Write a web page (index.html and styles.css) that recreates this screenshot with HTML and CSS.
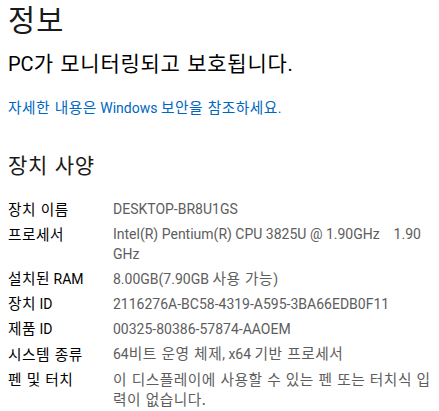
FILE: index.html
```html
<!DOCTYPE html>
<html lang="ko">
<head>
<meta charset="utf-8">
<link rel="stylesheet" href="styles.css">
</head>
<body>
<main class="page">
  <h1 class="title ko">정보</h1>
  <p class="status">PC<span class="ko">가 모니터링되고 보호됩니다</span>.</p>
  <a class="link" href="#"><span class="ko">자세한 내용은</span> Windows <span class="ko">보안을 참조하세요</span>.</a>
  <h2 class="section ko">장치 사양</h2>
  <dl class="specs">
    <div class="row"><dt class="ko">장치 이름</dt><dd>DESKTOP-BR8U1GS</dd></div>
    <div class="row"><dt class="ko">프로세서</dt><dd>Intel(R) Pentium(R) CPU 3825U @ 1.90GHz&nbsp;&nbsp;&nbsp; 1.90<br>GHz</dd></div>
    <div class="row"><dt><span class="ko">설치된</span> RAM</dt><dd>8.00GB(7.90GB <span class="ko">사용 가능</span>)</dd></div>
    <div class="row"><dt><span class="ko">장치</span> ID</dt><dd>2116276A-BC58-4319-A595-3BA66EDB0F11</dd></div>
    <div class="row"><dt><span class="ko">제품</span> ID</dt><dd>00325-80386-57874-AAOEM</dd></div>
    <div class="row"><dt class="ko">시스템 종류</dt><dd>64<span class="ko">비트 운영 체제</span>, x64 <span class="ko">기반 프로세서</span></dd></div>
    <div class="row"><dt class="ko">펜 및 터치</dt><dd class="ko">이 디스플레이에 사용할 수 있는 펜 또는 터치식 입<br>력이 없습니다.</dd></div>
  </dl>
</main>
</body>
</html>
```
FILE: styles.css
```css
html, body {
  margin: 0;
  padding: 0;
  background: #ffffff;
}
body {
  font-family: "Segoe UI", Roboto, "Noto Sans CJK KR", sans-serif;
  color: #000000;
}
.ko {
  font-family: "Noto Sans CJK KR", sans-serif;
  letter-spacing: 0.035em;
}
span.ko {
  font-size: 1.05em;
  line-height: 1;
}
dt.ko, dd.ko {
  font-size: 14.7px;
}
.page {
  padding: 0 8px;
  display: flex;
  flex-direction: column;
  align-items: flex-start;
}
.title {
  margin: 0;
  font-size: 29.5px;
  font-weight: 400;
  line-height: 36px;
  color: #1a1a1a;
}
.status {
  margin: 14px 0 0;
  font-size: 20px;
  line-height: 28px;
  color: #000000;
}
.link {
  margin-top: 20px;
  font-size: 14px;
  line-height: 20px;
  color: #0067c0;
  text-decoration: none;
}
.section {
  margin: 32px 0 0;
  font-size: 21px;
  font-weight: 400;
  line-height: 28px;
  color: #1a1a1a;
}
.specs {
  margin: 21px 0 0;
  display: flex;
  flex-direction: column;
  gap: 5px;
}
.row {
  display: flex;
  font-size: 14px;
  line-height: 20px;
}
.row dt {
  width: 105px;
  flex: none;
  color: #000000;
}
.row dd {
  margin: 0;
  color: #5d5d5d;
  white-space: nowrap;
}
```
